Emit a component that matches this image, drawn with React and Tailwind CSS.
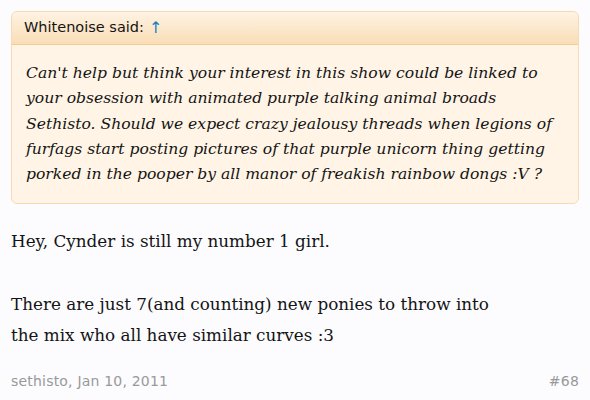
export default function App() {
  return (
    <div className="min-h-[400px] w-[590px] bg-[#fcfcff] px-[11px] pt-[11px]">
      <div className="rounded-[6px] border border-[#f9d9b0] bg-[#fff4e6]">
        <div className="flex h-[33px] items-center rounded-t-[6px] border-b border-[#f9c98f] bg-gradient-to-b from-[#fef3e3] to-[#f9ddb6] px-[12px] font-['DejaVu_Sans',sans-serif] text-[14.5px] text-[#141414]">
          <span>Whitenoise said:</span>
          <span className="ml-[5px] text-[16px] text-[#1d7fc1]">↑</span>
        </div>
        <div className="pl-[14px] pr-[20px] pt-[16px] pb-[16px] font-['DejaVu_Serif',serif] text-[15.6px] italic leading-[25.3px] text-[#141414]">
          Can't help but think your interest in this show could be linked to your obsession with animated purple talking animal broads Sethisto. Should we expect crazy jealousy threads when legions of furfags start posting pictures of that purple unicorn thing getting porked in the pooper by all manor of freakish rainbow dongs :V ?
        </div>
      </div>
      <div className="max-w-[500px] pt-[22px] font-['DejaVu_Serif',serif] text-[16.8px] leading-[31.5px] text-[#141414]">
        <p>Hey, Cynder is still my number 1 girl.</p>
        <p className="h-[31px]"></p>
        <p>There are just 7(and counting) new ponies to throw into the mix who all have similar curves :3</p>
      </div>
      <div className="mt-[19px] flex justify-between font-['DejaVu_Sans',sans-serif] text-[14px] tracking-[0.2px] text-[#999999]">
        <span>sethisto, Jan 10, 2011</span>
        <span>#68</span>
      </div>
    </div>
  );
}
